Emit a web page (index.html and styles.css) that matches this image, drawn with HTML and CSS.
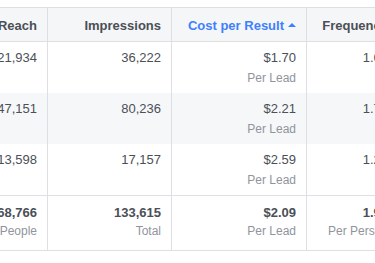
FILE: index.html
```html
<!DOCTYPE html>
<html>
<head>
<meta charset="utf-8">
<link rel="stylesheet" href="styles.css">
</head>
<body>
<div class="wrap">
  <div class="table">
    <div class="row head">
      <div class="cell c0">Reach</div>
      <div class="cell c1">Impressions</div>
      <div class="cell c2 sorted">Cost per Result<span class="arrow"></span></div>
      <div class="cell c3 left">Frequency</div>
    </div>
    <div class="row data">
      <div class="cell c0"><div class="val">21,934</div></div>
      <div class="cell c1"><div class="val">36,222</div></div>
      <div class="cell c2"><div class="val">$1.70</div><div class="sub">Per Lead</div></div>
      <div class="cell c3"><div class="val">1.65</div></div>
    </div>
    <div class="row data alt">
      <div class="cell c0"><div class="val">47,151</div></div>
      <div class="cell c1"><div class="val">80,236</div></div>
      <div class="cell c2"><div class="val">$2.21</div><div class="sub">Per Lead</div></div>
      <div class="cell c3"><div class="val">1.70</div></div>
    </div>
    <div class="row data">
      <div class="cell c0"><div class="val">13,598</div></div>
      <div class="cell c1"><div class="val">17,157</div></div>
      <div class="cell c2"><div class="val">$2.59</div><div class="sub">Per Lead</div></div>
      <div class="cell c3"><div class="val">1.26</div></div>
    </div>
    <div class="row total">
      <div class="cell c0"><div class="val">68,766</div><div class="sub">People</div></div>
      <div class="cell c1"><div class="val">133,615</div><div class="sub">Total</div></div>
      <div class="cell c2"><div class="val">$2.09</div><div class="sub">Per Lead</div></div>
      <div class="cell c3"><div class="val">1.94</div><div class="sub">Per Person</div></div>
    </div>
  </div>
</div>
</body>
</html>
```

FILE: styles.css
```css
html, body {
  margin: 0;
  padding: 0;
  background: #ffffff;
}
.wrap {
  width: 375px;
  height: 263px;
  overflow: hidden;
  padding-top: 7px;
  box-sizing: border-box;
  font-family: "Liberation Sans", Arial, sans-serif;
  color: #4b4f56;
}
.table {
  display: flex;
  flex-direction: column;
  width: 452px;
  margin-left: -53px;
}
.row {
  display: flex;
}
.cell {
  box-sizing: border-box;
  border-right: 1px solid #dddfe2;
  padding: 7px 10px 0 10px;
  text-align: right;
  flex-shrink: 0;
}
.c0 { width: 101px; }
.c1 { width: 124px; }
.c2 { width: 135px; }
.c3 { width: 92px; }
.head {
  background: #f5f6f7;
  border-top: 1px solid #dddfe2;
  border-bottom: 1px solid #dddfe2;
  height: 35px;
  box-sizing: border-box;
}
.head .cell {
  padding-top: 10px;
  font-size: 13px;
  line-height: 16px;
  font-weight: bold;
  white-space: nowrap;
}
.head .sorted {
  color: #4080ff;
}
.arrow {
  display: inline-block;
  width: 0;
  height: 0;
  border-left: 4px solid transparent;
  border-right: 4px solid transparent;
  border-bottom: 4px solid #4080ff;
  margin-left: 4px;
  vertical-align: 3px;
}
.data {
  height: 51px;
}
.alt {
  background: #f6f7f9;
}
.val {
  font-size: 13px;
  line-height: 18px;
  white-space: nowrap;
}
.sub {
  font-size: 12px;
  line-height: 18px;
  color: #90949c;
  white-space: nowrap;
}
.data .sub {
  margin-top: 2px;
}
.total {
  height: 56px;
  box-sizing: border-box;
  border-top: 1px solid #dddfe2;
  border-bottom: 1px solid #dddfe2;
}
.total .cell {
  padding-top: 8px;
}
.total .val {
  font-weight: bold;
}
```
